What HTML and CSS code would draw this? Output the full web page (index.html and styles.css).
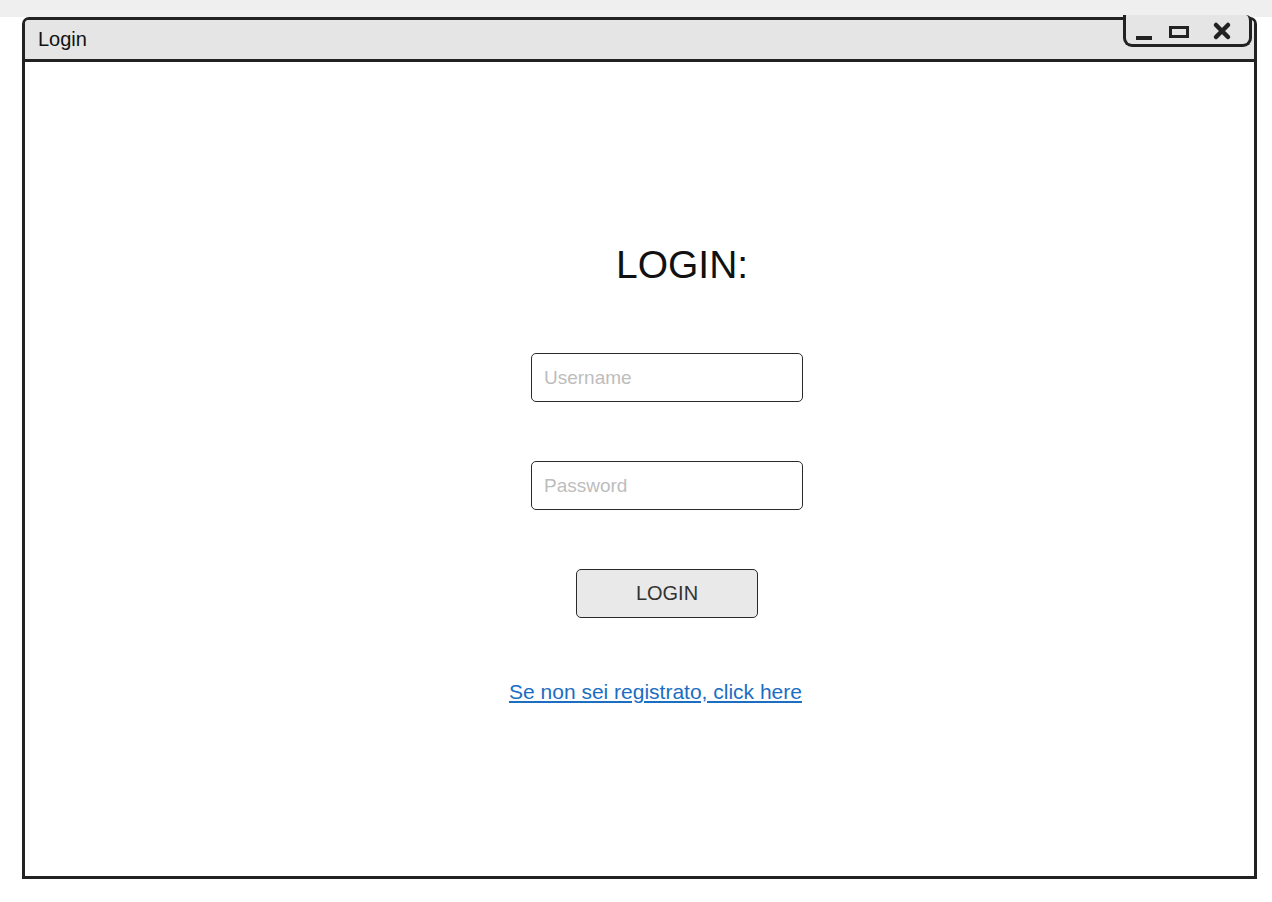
FILE: index.html
```html
<!DOCTYPE html>
<html lang="it">
<head>
<meta charset="utf-8">
<title>Login</title>
<link rel="stylesheet" href="styles.css">
</head>
<body>
<div class="topstrip"></div>
<div class="window">
  <div class="titlebar">
    <span class="title">Login</span>
    <div class="controls">
      <svg width="130" height="32" viewBox="0 0 130 32">
        <rect x="13" y="21" width="16" height="4" fill="#222"/>
        <rect x="47.5" y="12.5" width="17" height="9" fill="none" stroke="#222" stroke-width="3"/>
        <path d="M93 10 L105 22 M105 10 L93 22" stroke="#222" stroke-width="4.5" stroke-linecap="round"/>
      </svg>
    </div>
  </div>
  <div class="content">
    <h1 class="heading">LOGIN:</h1>
    <input class="field first" type="text" placeholder="Username">
    <input class="field" type="password" placeholder="Password">
    <button class="btn" type="button">LOGIN</button>
    <a class="link" href="#">Se non sei registrato, click here</a>
  </div>
</div>
</body>
</html>
```
FILE: styles.css
```css
html, body {
  margin: 0;
  padding: 0;
  background: #ffffff;
  font-family: "Liberation Sans", Arial, sans-serif;
}
.topstrip {
  height: 17px;
  background: #efefef;
}
.window {
  box-sizing: border-box;
  margin-left: 22px;
  width: 1235px;
  height: 862px;
  border: 3px solid #222;
  border-radius: 7px 7px 0 0;
  display: flex;
  flex-direction: column;
}
.titlebar {
  position: relative;
  box-sizing: border-box;
  height: 42px;
  background: #e5e5e5;
  border-bottom: 3px solid #222;
  border-radius: 4px 4px 0 0;
  display: flex;
  align-items: center;
  padding-left: 13px;
}
.title {
  font-size: 20px;
  color: #111;
}
.controls {
  position: absolute;
  right: 2px;
  top: -5px;
  box-sizing: border-box;
  width: 129px;
  height: 32px;
  border: 3px solid #222;
  border-top: none;
  border-radius: 0 6px 9px 9px;
  background: #e5e5e5;
}
.controls svg {
  position: absolute;
  left: -3px;
  top: 0;
}
.content {
  flex: 1;
  display: flex;
  flex-direction: column;
  align-items: flex-start;
  padding-top: 181px;
}
.heading {
  margin: 0 0 0 591px;
  font-size: 39px;
  line-height: 44px;
  font-weight: normal;
  color: #111;
}
.field {
  box-sizing: border-box;
  margin: 59px 0 0 506px;
  width: 272px;
  height: 49px;
  border: 1.6px solid #2a2a2a;
  border-radius: 5px;
  padding: 0 12px;
  font-family: "Liberation Sans", Arial, sans-serif;
  font-size: 19px;
  color: #333;
  background: #fff;
  outline: none;
}
.field.first {
  margin-top: 66px;
}
.field::placeholder {
  color: #bdbdbd;
}
.btn {
  box-sizing: border-box;
  margin: 59px 0 0 551px;
  width: 182px;
  height: 49px;
  border: 1.6px solid #2a2a2a;
  border-radius: 5px;
  background: #e9e9e9;
  font-family: "Liberation Sans", Arial, sans-serif;
  font-size: 20px;
  color: #333;
  padding: 0;
}
.link {
  margin: 62px 0 0 484px;
  font-size: 21px;
  line-height: 24px;
  color: #1b6ec2;
  text-decoration: underline;
}
```
